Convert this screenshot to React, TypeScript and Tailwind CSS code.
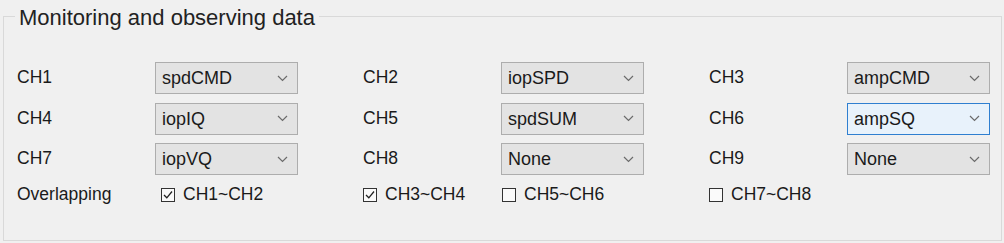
import React from "react";

function Chevron() {
  return (
    <svg width="11" height="7" viewBox="0 0 11 7" className="shrink-0">
      <path d="M1 1 L5.5 5.5 L10 1" fill="none" stroke="#6b6b6b" strokeWidth="1.2" />
    </svg>
  );
}

function Combo({ value, focused }: { value: string; focused?: boolean }) {
  return (
    <div
      className={
        focused
          ? "w-[143px] h-[32px] shrink-0 flex items-center justify-between pl-[6px] pr-[9px] border border-[#2f7fd0] bg-[#e8f2fb]"
          : "w-[143px] h-[32px] shrink-0 flex items-center justify-between pl-[6px] pr-[9px] border border-[#adadad] bg-[#e3e3e3]"
      }
    >
      <span className="text-[18px] leading-none text-[#1a1a1a]">{value}</span>
      <Chevron />
    </div>
  );
}

function Check({ label, checked }: { label: string; checked?: boolean }) {
  return (
    <div className="flex items-center gap-[8px]">
      <div className="w-[14px] h-[14px] shrink-0 border border-[#333] bg-[#fafafa] flex items-center justify-center">
        {checked && (
          <svg width="12" height="12" viewBox="0 0 12 12">
            <path d="M2 6 L4.8 8.8 L10 2.5" fill="none" stroke="#222" strokeWidth="1.3" />
          </svg>
        )}
      </div>
      <span className="text-[17.5px] leading-none text-[#1a1a1a] whitespace-nowrap">{label}</span>
    </div>
  );
}

const rows: [string, string, boolean?][][] = [
  [["CH1", "spdCMD"], ["CH2", "iopSPD"], ["CH3", "ampCMD"]],
  [["CH4", "iopIQ"], ["CH5", "spdSUM"], ["CH6", "ampSQ", true]],
  [["CH7", "iopVQ"], ["CH8", "None"], ["CH9", "None"]],
];

export default function App() {
  return (
    <div
      className="w-[1004px] h-[243px] bg-[#f0f0f0] pt-[16px] pl-[3px] pr-[2px] pb-[2px]"
      style={{ fontFamily: '"Liberation Sans", Arial, sans-serif' }}
    >
      <div className="relative h-full border border-[#d9d9d9] pt-[45px] pl-[13px]">
        <span className="absolute left-[11px] top-[-12px] px-[4px] bg-[#f0f0f0] text-[22px] leading-[26px] text-[#222]">
          Monitoring and observing data
        </span>
        <div className="flex flex-col gap-[8.5px]">
          {rows.map((row, i) => (
            <div key={i} className="flex">
              {row.map(([label, value, focused], j) => (
                <div key={label} className={j < 2 ? "w-[346px] shrink-0 flex items-center" : "flex items-center"}>
                  <span className="w-[138px] shrink-0 text-[17.5px] leading-none text-[#1a1a1a]">{label}</span>
                  <Combo value={value} focused={focused} />
                </div>
              ))}
            </div>
          ))}
        </div>
        <div className="flex items-center h-[32px] mt-[4px]">
          <span className="w-[144px] shrink-0 text-[17.5px] leading-none text-[#1a1a1a]">Overlapping</span>
          <div className="w-[202px] shrink-0">
            <Check label="CH1~CH2" checked />
          </div>
          <div className="w-[139px] shrink-0">
            <Check label="CH3~CH4" checked />
          </div>
          <div className="w-[207px] shrink-0">
            <Check label="CH5~CH6" />
          </div>
          <Check label="CH7~CH8" />
        </div>
      </div>
    </div>
  );
}
